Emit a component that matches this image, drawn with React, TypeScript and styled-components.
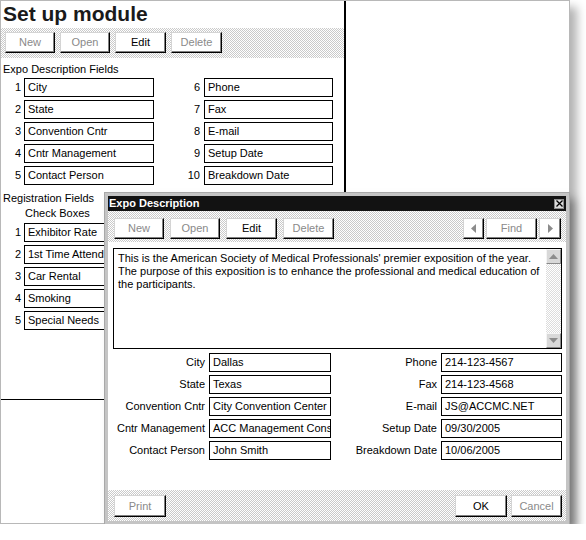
import React from "react";
import styled, { createGlobalStyle, css } from "styled-components";

const GlobalStyle = createGlobalStyle`
  body {
    margin: 0;
    background: #fff;
    font-family: "Liberation Sans", Arial, sans-serif;
    font-size: 11px;
    color: #000;
  }
`;

const dither = css`
  background-color: #fff;
  background-image: repeating-conic-gradient(#cacaca 0 25%, #fff 0 50%);
  background-size: 2px 2px;
`;

const setupLeft = ["City", "State", "Convention Cntr", "Cntr Management", "Contact Person"];
const setupRight = ["Phone", "Fax", "E-mail", "Setup Date", "Breakdown Date"];
const checkBoxes = ["Exhibitor Rate", "1st Time Attend", "Car Rental", "Smoking", "Special Needs"];

const leftFields = [
  ["City", "Dallas"],
  ["State", "Texas"],
  ["Convention Cntr", "City Convention Center"],
  ["Cntr Management", "ACC Management Consu"],
  ["Contact Person", "John Smith"],
];
const rightFields = [
  ["Phone", "214-123-4567"],
  ["Fax", "214-123-4568"],
  ["E-mail", "JS@ACCMC.NET"],
  ["Setup Date", "09/30/2005"],
  ["Breakdown Date", "10/06/2005"],
];

const Arrow = ({ dir }: { dir: "left" | "right" | "up" | "down" }) => {
  const pts = {
    left: "5,0 5,9 0,4.5",
    right: "0,0 0,9 5,4.5",
    up: "0,5 9,5 4.5,0",
    down: "0,0 9,0 4.5,5",
  }[dir];
  const vertical = dir === "up" || dir === "down";
  return (
    <svg width={vertical ? 9 : 5} height={vertical ? 5 : 9} viewBox={vertical ? "0 0 9 5" : "0 0 5 9"}>
      <polygon points={pts} fill="#8c8c8c" />
    </svg>
  );
};

const App: React.FC = () => {
  return (
    <>
      <GlobalStyle />
      <Window>
        <LeftPane>
          <Title>Set up module</Title>
          <Toolbar>
            <Button $w={50} $disabled>New</Button>
            <Button $w={50} $disabled>Open</Button>
            <Button $w={51}>Edit</Button>
            <Button $w={51} $disabled>Delete</Button>
          </Toolbar>
          <SectionLabel>Expo Description Fields</SectionLabel>
          <SetupGrid>
            {setupLeft.map((name, i) => (
              <React.Fragment key={name}>
                <Num $pad={3}>{i + 1}</Num>
                <Box>{name}</Box>
                <Num $pad={4}>{i + 6}</Num>
                <Box>{setupRight[i]}</Box>
              </React.Fragment>
            ))}
          </SetupGrid>
          <SectionLabel $top={6}>Registration Fields</SectionLabel>
          <SubLabel>Check Boxes</SubLabel>
          <CheckGrid>
            {checkBoxes.map((name, i) => (
              <React.Fragment key={name}>
                <Num $pad={3}>{i + 1}</Num>
                <Box>{name}</Box>
              </React.Fragment>
            ))}
          </CheckGrid>
          <PaneFooter />
        </LeftPane>
        <RightPane />

        <Dialog>
          <TitleBar>
            <span>Expo Description</span>
            <CloseBox>
              <svg width="7" height="7" viewBox="0 0 7 7">
                <path d="M0.5 0.5 L6.5 6.5 M6.5 0.5 L0.5 6.5" stroke="#000" strokeWidth="1.3" />
              </svg>
            </CloseBox>
          </TitleBar>
          <DialogToolbar>
            <ButtonGroup $gap={6}>
              <Button $w={50} $disabled>New</Button>
              <Button $w={50} $disabled>Open</Button>
              <Button $w={51}>Edit</Button>
              <Button $w={51} $disabled>Delete</Button>
            </ButtonGroup>
            <ButtonGroup $gap={2}>
              <Button $w={21}><Arrow dir="left" /></Button>
              <Button $w={51} $disabled>Find</Button>
              <Button $w={22}><Arrow dir="right" /></Button>
            </ButtonGroup>
          </DialogToolbar>
          <DialogBody>
            <Memo>
              <MemoText>
                This is the American Society of Medical Professionals' premier exposition of the year.
                <br />
                The purpose of this exposition is to enhance the professional and medical education of
                <br />
                the participants.
              </MemoText>
              <ScrollBar>
                <ScrollButton><Arrow dir="up" /></ScrollButton>
                <ScrollTrack />
                <ScrollButton><Arrow dir="down" /></ScrollButton>
              </ScrollBar>
            </Memo>
            <FormGrid>
              {leftFields.map(([label, value], i) => (
                <React.Fragment key={label}>
                  <FieldLabel>{label}</FieldLabel>
                  <Box>{value}</Box>
                  <FieldLabel>{rightFields[i][0]}</FieldLabel>
                  <Box>{rightFields[i][1]}</Box>
                </React.Fragment>
              ))}
            </FormGrid>
          </DialogBody>
          <DialogFooter>
            <Button $w={52} $h={22} $disabled>Print</Button>
            <ButtonGroup $gap={4}>
              <Button $w={52} $h={22}>OK</Button>
              <Button $w={51} $h={22} $disabled>Cancel</Button>
            </ButtonGroup>
          </DialogFooter>
        </Dialog>
      </Window>
    </>
  );
};

const Window = styled.div`
  position: relative;
  width: 570px;
  height: 524px;
  box-sizing: border-box;
  border: 1px solid #b8b8b8;
  background: #fff;
  box-shadow: 7px 7px 9px rgba(0, 0, 0, 0.3);
  display: grid;
  grid-template-columns: 345px 1fr;
`;

const LeftPane = styled.div`
  display: flex;
  flex-direction: column;
  border-right: 2px solid #000;
  min-height: 0;
`;

const RightPane = styled.div`
  background: #fff;
`;

const Title = styled.div`
  height: 27px;
  line-height: 25px;
  padding-left: 2px;
  font-size: 21px;
  font-weight: bold;
  color: #1a1a1a;
`;

const Toolbar = styled.div`
  ${dither};
  height: 30px;
  box-sizing: border-box;
  padding: 4px 4px 0;
  display: flex;
  gap: 5px;
`;

const ButtonGroup = styled.div<{ $gap: number }>`
  display: flex;
  gap: ${(p) => p.$gap}px;
`;

const Button = styled.div<{ $w: number; $h?: number; $disabled?: boolean }>`
  width: ${(p) => p.$w}px;
  height: ${(p) => p.$h ?? 21}px;
  box-sizing: border-box;
  background: #fff;
  border: 1px solid;
  border-color: #d4d4d4 #000 #000 #d4d4d4;
  box-shadow: inset -1px -1px 0 #808080;
  display: flex;
  align-items: center;
  justify-content: center;
  padding-bottom: 1px;
  color: ${(p) => (p.$disabled ? "#8a8a8a" : "#000")};
`;

const SectionLabel = styled.div<{ $top?: number }>`
  line-height: 14px;
  padding: ${(p) => p.$top ?? 4}px 0 0 2px;
`;

const SubLabel = styled.div`
  line-height: 15px;
  padding: 1px 0 0 24px;
`;

const SetupGrid = styled.div`
  display: grid;
  grid-template-columns: 21px 130px 50px 129px;
  grid-auto-rows: 19px;
  row-gap: 3px;
  padding: 2px 0 0 2px;
`;

const CheckGrid = styled(SetupGrid)`
  grid-template-columns: 21px 130px;
`;

const Num = styled.div<{ $pad: number }>`
  text-align: right;
  padding-right: ${(p) => p.$pad}px;
  line-height: 19px;
`;

const Box = styled.div`
  border: 1px solid #000;
  background: #fff;
  line-height: 17px;
  padding-left: 3px;
  white-space: nowrap;
  overflow: hidden;
`;

const PaneFooter = styled.div`
  margin-top: auto;
  height: 123px;
  border-top: 1px solid #000;
`;

const Dialog = styled.div`
  position: absolute;
  left: 104px;
  top: 192px;
  width: 464px;
  height: 331px;
  box-sizing: border-box;
  border: 3px solid #c4c4c4;
  background: #fff;
  box-shadow: 0 0 0 1px #a8a8a8, 6px 6px 9px rgba(0, 0, 0, 0.35);
  display: flex;
  flex-direction: column;
`;

const TitleBar = styled.div`
  height: 15px;
  background: #121212;
  color: #fff;
  font-weight: bold;
  line-height: 15px;
  padding: 0 2px 0 1px;
  display: flex;
  justify-content: space-between;
  align-items: center;
`;

const CloseBox = styled.div`
  width: 10px;
  height: 10px;
  box-sizing: border-box;
  background: #dcdcdc;
  border: 1px solid #8c8c8c;
  display: flex;
  align-items: center;
  justify-content: center;
`;

const DialogToolbar = styled.div`
  ${dither};
  height: 31px;
  box-sizing: border-box;
  padding: 7px 5px 0 6px;
  display: flex;
  justify-content: space-between;
  align-items: flex-start;
`;

const DialogBody = styled.div`
  flex: 1;
  display: flex;
  flex-direction: column;
  padding: 6px 4px 0 5px;
`;

const Memo = styled.div`
  height: 101px;
  box-sizing: border-box;
  border: 1px solid #000;
  display: flex;
`;

const MemoText = styled.div`
  flex: 1;
  padding: 3px 0 0 4px;
  line-height: 13px;
  white-space: nowrap;
  overflow: hidden;
`;

const ScrollBar = styled.div`
  width: 15px;
  display: flex;
  flex-direction: column;
`;

const ScrollButton = styled.div`
  height: 15px;
  box-sizing: border-box;
  background: #d8d8d8;
  border: 1px solid;
  border-color: #f4f4f4 #8a8a8a #8a8a8a #f4f4f4;
  display: flex;
  align-items: center;
  justify-content: center;
`;

const ScrollTrack = styled.div`
  flex: 1;
  background-color: #fff;
  background-image: repeating-conic-gradient(#dcdcdc 0 25%, #fff 0 50%);
  background-size: 2px 2px;
`;

const FormGrid = styled.div`
  display: grid;
  grid-template-columns: 101px 122px 110px 121px;
  grid-auto-rows: 19px;
  row-gap: 3px;
  margin: 4px 0 0 -5px;
`;

const FieldLabel = styled.div`
  text-align: right;
  padding-right: 4px;
  line-height: 19px;
  white-space: nowrap;
`;

const DialogFooter = styled.div`
  ${dither};
  height: 31px;
  box-sizing: border-box;
  padding: 5px 4px 0 6px;
  display: flex;
  justify-content: space-between;
  align-items: flex-start;
`;

export default App;
